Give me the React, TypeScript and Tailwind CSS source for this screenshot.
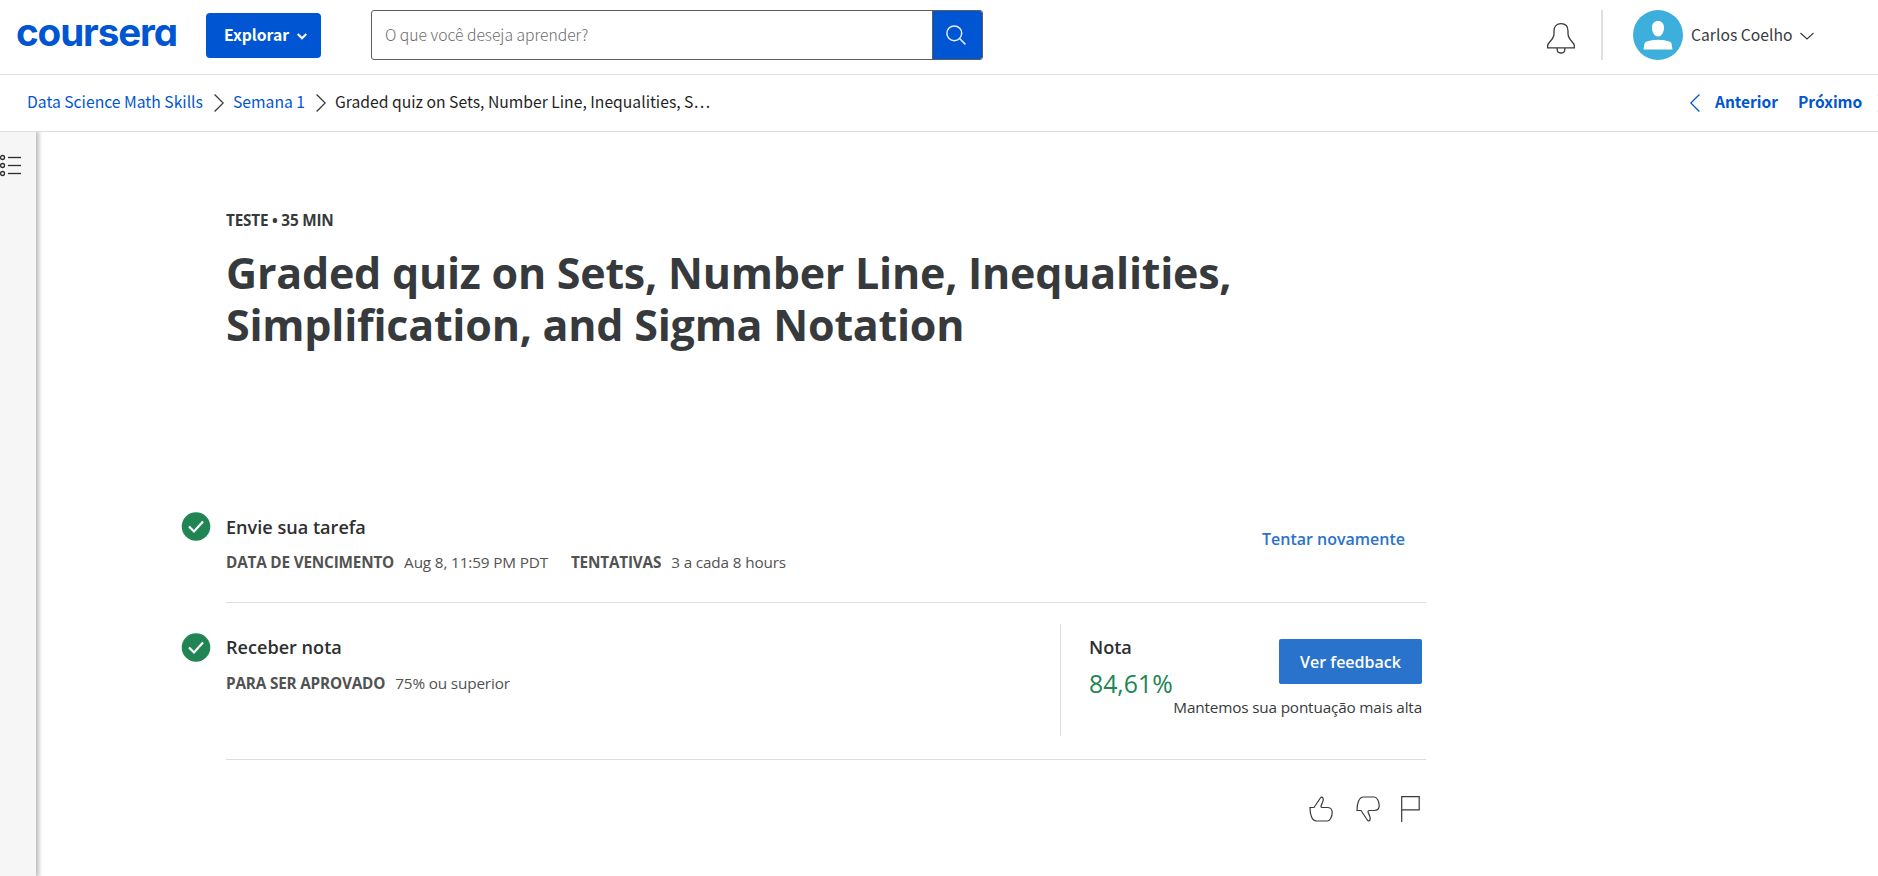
import React from "react";

const SOURCE = "font-['Noto_Sans_CJK_SC',sans-serif]";

function Chevron({ dir, className = "" }: { dir: "left" | "right"; className?: string }) {
  return (
    <svg width="10" height="18" viewBox="0 0 10 18" fill="none" stroke="currentColor" strokeWidth="1.3" className={`shrink-0 ${className}`}>
      <path d={dir === "right" ? "M.6.5 9.2 9 .6 17.5" : "M9.4.5.8 9l8.6 8.5"} />
    </svg>
  );
}

function Logo() {
  return (
    <div className="h-[50px] w-[162px] font-['Inter',sans-serif] text-[38.6px] leading-[44px] font-bold tracking-[-1.1px] whitespace-nowrap text-[#0056d2] [font-feature-settings:'cv11']">
      coursera
    </div>
  );
}

function Header() {
  return (
    <header className={`flex h-[75px] items-start border-b border-[#dfdfdf] pl-4 ${SOURCE}`}>
      <div className="pt-[10px]"><Logo /></div>
      <button className="mt-[13px] ml-[28px] flex h-[45px] w-[115px] items-center rounded-[4px] bg-[#0056d2] pl-[18px] text-[15.7px] leading-[20px] font-bold whitespace-nowrap text-white">
        <span className="w-[73px] pb-[2px] text-left">Explorar</span>
        <svg width="10" height="7" viewBox="0 0 10 7" fill="none" stroke="currentColor" strokeWidth="2" className="mt-0.5">
          <path d="M.7 1 5 5.3 9.3 1" />
        </svg>
      </button>
      <div className="mt-[10px] ml-[50px] flex h-[50px] w-[612px] overflow-hidden rounded-[3px] border border-[#5d5d5d]">
        <div className="flex flex-1 items-center pb-px pl-[13px] text-[15.7px] leading-[20px] font-light text-[#6b6b6b]">O que você deseja aprender?</div>
        <div className="flex w-[50px] items-center justify-center border-l border-[#5d5d5d] bg-[#0056d2] pr-[3px] pb-px">
          <svg width="20" height="20" viewBox="0 0 20 20" fill="none" stroke="#e4edfa" strokeWidth="1.5">
            <circle cx="8.3" cy="8.3" r="7.4" />
            <path d="m13.3 13.3 6.1 6.1" />
          </svg>
        </div>
      </div>
      <div className="mt-[10px] ml-auto flex h-[50px] items-center pr-[64px]">
        <svg width="28" height="31" viewBox="0 0 28 31" fill="none" stroke="#373a3c" strokeWidth="1.3" className="mt-[6px]">
          <path d="M.7 24.8v-2.3c0-1.4.8-2.2 2.2-3.7 2.7-2.8 4.1-4.8 4.1-8.3V8c0-4.5 2.7-7.3 7-7.3s7 2.8 7 7.3v2.5c0 3.5 1.4 5.5 4.1 8.3 1.4 1.5 2.2 2.3 2.2 3.7v2.3z" />
          <path d="M10.2 25v1.5c0 2.2 1.5 3.5 3.8 3.5s3.8-1.3 3.8-3.5V25" />
        </svg>
        <div className="ml-[26px] h-[50px] w-[2px] bg-[#dfdfdf]" />
        <svg width="50" height="50" viewBox="0 0 50 50" className="ml-[30px]">
          <circle cx="25" cy="25" r="25" fill="#3cafdc" />
          <path fill="#fff" d="M25 11c3.600 0 6 2.400 6 6.500 0 4.800-2.400 9-6 9s-6-4.200-6-9c0-4.100 2.400-6.500 6-6.500zM10.500 39.500l1-6c.2-1 .8-1.500 1.600-1.800C16.500 30.400 20.500 29.700 25 29.700s8.500.7 11.900 2c.8.3 1.400.8 1.600 1.800l1 6z" />
        </svg>
        <span className="ml-2 w-[109px] pb-px text-[15.7px] leading-[20px] whitespace-nowrap text-[#373a3c]">Carlos Coelho</span>
        <svg width="14" height="8" viewBox="0 0 14 8" fill="none" stroke="#373a3c" strokeWidth="1.1" className="mt-[2px]">
          <path d="M.5 1 7 7l6.500-6" />
        </svg>
      </div>
    </header>
  );
}

function Breadcrumb() {
  return (
    <nav className={`flex h-[57px] items-center overflow-hidden border-b border-[#dfdfdf] pl-[27px] text-[15.7px] leading-[20px] whitespace-nowrap text-[#0056d2] ${SOURCE}`}>
      <span className="w-[187px] pb-[3px]">Data Science Math Skills</span>
      <Chevron dir="right" className="text-[#373a3c]" />
      <span className="ml-[9px] w-[83px] pb-[3px]">Semana 1</span>
      <Chevron dir="right" className="text-[#373a3c]" />
      <span className="ml-[9px] pb-[3px] text-[#1f1f1f]">Graded quiz on Sets, Number Line, Inequalities, S…</span>
      <div className="-mr-[9px] ml-auto flex items-center text-[15.5px] font-bold">
        <Chevron dir="left" />
        <span className="ml-[15px] w-[83px] pb-[4px]">Anterior</span>
        <span className="w-[79px] pb-[4px]">Próximo</span>
        <Chevron dir="right" className="text-[#b9cff0]" />
      </div>
    </nav>
  );
}

function Sidebar() {
  return (
    <aside className="z-10 w-[36px] shrink-0 bg-[#f6f6f6] pt-[22px] shadow-[2px_0_4px_1px_rgba(0,0,0,0.25)]">
      <svg width="22" height="23" viewBox="0 0 22 23" fill="none" stroke="#2a2c2e" strokeWidth="1.3">
        {[3.5, 11.5, 19.5].map((y) => (
          <g key={y}>
            <circle cx="2.500" cy={y} r="2" />
            <path d={`M8 ${y}h13`} />
          </g>
        ))}
      </svg>
    </aside>
  );
}

function Check({ className = "" }: { className?: string }) {
  return (
    <svg width="30" height="29" viewBox="0 0 30 29" className={`mr-[15px] shrink-0 ${className}`}>
      <circle cx="15" cy="14.5" r="14.3" fill="#208553" />
      <path d="m8 14.500 5 5 9-10" fill="none" stroke="#fff" strokeWidth="2.200" />
    </svg>
  );
}

function Meta({ label, value }: { label: string; value: string }) {
  return (
    <div className="flex gap-[10px] text-[15.3px] leading-[20px] whitespace-nowrap text-[#525252]">
      <span className="font-bold tracking-[-0.18px]">{label}</span>
      <span className="tracking-[-0.15px]">{value}</span>
    </div>
  );
}

function Feedback() {
  return (
    <div className="flex h-[26px] pl-[1128px] text-[#373a3c]">
      <svg width="24" height="26" viewBox="0 0 24 26" fill="none" stroke="currentColor" strokeWidth="1.2">
        <path d="M1 11.500h4L11.500 1.800C12 .9 13.500.7 14 2c.5 1.200.2 2.800-.4 4.300-.8 1.800-1.600 3-1.600 4.200 0 .8.500 1 1.200 1h5c3 0 5 1.700 5 5 0 4.500-2.500 8.500-5 8.500H7.500C3 25 1 19 1 11.500z" />
      </svg>
      <svg width="24" height="26" viewBox="0 0 24 26" fill="none" stroke="currentColor" strokeWidth="1.2" className="ml-[23px]">
        <path d="M1 14.500h4l6.500 9.700c.5.900 2 1.100 2.500-.2.500-1.200.2-2.800-.4-4.300-.8-1.800-1.600-3-1.600-4.200 0-.8.500-1 1.200-1h5c3 0 5-1.700 5-5C23.200 5 20.700 1 18.200 1H7.500C3 1 1 7 1 14.500z" />
      </svg>
      <svg width="19" height="26" viewBox="0 0 19 26" fill="none" stroke="currentColor" strokeWidth="1.2" className="ml-[21px]">
        <path d="M.7 26V.7h17.500v13.100H.7" />
      </svg>
    </div>
  );
}

const HEADING = "text-[18.1px] leading-[24px] font-semibold text-[#2d2f31]";

export default function App() {
  return (
    <div className="flex h-[876px] w-[1878px] flex-col overflow-hidden bg-white">
      <Header />
      <Breadcrumb />
      <div className="flex flex-1 overflow-hidden">
        <Sidebar />
        <main className="flex w-[1390px] flex-col pl-[145px] font-['Open_Sans',sans-serif] text-[#373a3c]">
          <div className="flex flex-col pl-[45px]">
            <p className="mt-[78px] text-[15.3px] leading-[20px] font-bold tracking-[-0.2px]">TESTE • 35 MIN</p>
            <h1 className="mt-[17px] text-[43px] leading-[52px] font-bold tracking-[-0.24px] whitespace-nowrap">
              Graded quiz on Sets, Number Line, Inequalities,
              <br />
              Simplification, and Sigma Notation
            </h1>
          </div>
          <section className="mt-[161px] flex h-[91px] items-start">
            <Check />
            <div className="flex h-[91px] flex-1 border-b border-[#dfdfdf]">
              <div className="flex flex-1 flex-col">
                <h2 className={`mt-[3px] ${HEADING}`}>Envie sua tarefa</h2>
                <div className="mt-[13px] flex gap-[23px]">
                  <Meta label="DATA DE VENCIMENTO" value="Aug 8, 11:59 PM PDT" />
                  <Meta label="TENTATIVAS" value="3 a cada 8 hours" />
                </div>
              </div>
              <a className="mt-[17px] mr-[21px] text-[16px] leading-[20px] font-semibold text-[#2a73cc]">Tentar novamente</a>
            </div>
          </section>
          <section className="mt-[21px] flex h-[135px] items-start">
            <Check className="mt-[9px]" />
            <div className="flex h-[135px] w-[834px]">
              <div className="flex flex-col">
                <h2 className={`mt-[11px] ${HEADING}`}>Receber nota</h2>
                <div className="mt-[14px]">
                  <Meta label="PARA SER APROVADO" value="75% ou superior" />
                </div>
              </div>
            </div>
            <div className="flex h-[112px] w-[366px] border-l border-[#dfdfdf] pr-[4px] pl-[28px]">
              <div className="mt-[11px] flex w-[83px] shrink-0 flex-col">
                <p className={HEADING}>Nota</p>
                <p className="mt-[9px] text-[24.8px] leading-[30px] text-[#208553]">84,61%</p>
              </div>
              <div className="mt-[15px] flex flex-1 flex-col items-end">
                <button className="h-[45px] w-[143px] rounded-[2px] bg-[#2a73cc] text-[16px] font-semibold text-white">Ver feedback</button>
                <p className="mt-[13px] text-[15.3px] leading-[20px] tracking-[-0.16px] whitespace-nowrap">Mantemos sua pontuação mais alta</p>
              </div>
            </div>
          </section>
          <div className="mb-[36px] ml-[45px] border-b border-[#dfdfdf]" />
          <Feedback />
        </main>
      </div>
    </div>
  );
}
